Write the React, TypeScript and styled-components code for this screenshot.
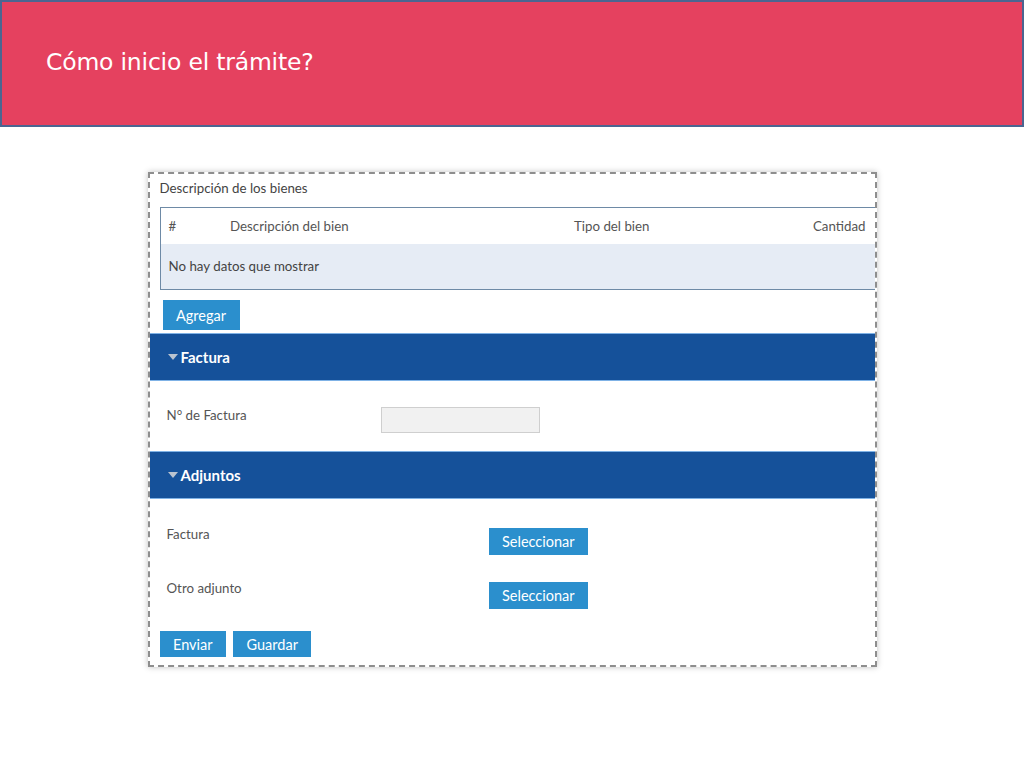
import styled, { createGlobalStyle } from 'styled-components';

const GlobalStyle = createGlobalStyle`
  html, body {
    margin: 0;
    padding: 0;
    background: #ffffff;
  }
  * {
    box-sizing: border-box;
  }
`;

const attachments = ['Factura', 'Otro adjunto'];

export default function App() {
  return (
    <Page>
      <GlobalStyle />
      <Banner>
        <BannerTitle>Cómo inicio el trámite?</BannerTitle>
      </Banner>
      <Stage>
        <Shot>
          <Caption>Descripción de los bienes</Caption>
          <Table>
            <thead>
              <tr>
                <Th style={{ width: 62 }}>#</Th>
                <Th style={{ width: 344 }}>Descripción del bien</Th>
                <Th>Tipo del bien</Th>
                <Th $right>Cantidad</Th>
              </tr>
            </thead>
            <tbody>
              <tr>
                <EmptyCell colSpan={4}>No hay datos que mostrar</EmptyCell>
              </tr>
            </tbody>
          </Table>
          <AddRow>
            <Button $h={30}>Agregar</Button>
          </AddRow>

          <SectionBar>
            <Caret />
            Factura
          </SectionBar>
          <FieldRow>
            <FieldLabel>N° de Factura</FieldLabel>
            <TextInput />
          </FieldRow>

          <SectionBar>
            <Caret />
            Adjuntos
          </SectionBar>
          <AttachList>
            {attachments.map(name => (
              <AttachRow key={name}>
                <FieldLabel>{name}</FieldLabel>
                <ButtonCell>
                  <Button $h={27}>Seleccionar</Button>
                </ButtonCell>
              </AttachRow>
            ))}
          </AttachList>

          <Footer>
            <Button $h={26}>Enviar</Button>
            <Button $h={26}>Guardar</Button>
          </Footer>
        </Shot>
      </Stage>
    </Page>
  );
}

const Page = styled.div`
  width: 1024px;
  height: 768px;
  background: #ffffff;
  font-family: Lato, 'Open Sans', sans-serif;
`;

const Banner = styled.header`
  height: 127px;
  background: #e5415f;
  border: 2px solid #4b6591;
  display: flex;
  align-items: center;
  padding: 0 0 4px 44px;
`;

const BannerTitle = styled.h1`
  margin: 0;
  font-family: 'DejaVu Sans', sans-serif;
  font-weight: 400;
  font-size: 23.5px;
  color: #ffffff;
  letter-spacing: -0.2px;
`;

const Stage = styled.main`
  display: flex;
  justify-content: center;
  padding-top: 45px;
`;

const Shot = styled.section`
  width: 729px;
  border: 2px dashed #8e8e8e;
  background: #ffffff;
  box-shadow: 0 0 6px rgba(0, 0, 0, 0.25);
  padding-bottom: 8px;
`;

const Caption = styled.div`
  padding: 6px 0 0 10px;
  height: 33px;
  font-size: 13.3px;
  color: #444;
`;

const Table = styled.table`
  margin-left: 10px;
  width: calc(100% - 10px);
  border-collapse: collapse;
  border: 1px solid #6e8aa6;
  border-right: none;
  font-size: 13.3px;
  color: #555;
`;

const Th = styled.th<{ $right?: boolean }>`
  height: 36px;
  padding: 0 ${p => (p.$right ? '9px' : '0')} 0 8px;
  text-align: ${p => (p.$right ? 'right' : 'left')};
  font-weight: 400;
  background: #ffffff;
`;

const EmptyCell = styled.td`
  height: 46px;
  padding: 0 8px;
  background: #e6ecf5;
  color: #444;
`;

const AddRow = styled.div`
  padding: 10px 0 3px 13px;
  display: flex;
`;

const Button = styled.button<{ $h: number }>`
  height: ${p => p.$h}px;
  padding: 0 13.5px;
  border: none;
  background: #2b8fcd;
  color: #ffffff;
  font-family: Lato, 'Open Sans', sans-serif;
  font-size: 14.5px;
  cursor: pointer;
`;

const SectionBar = styled.div`
  height: 48px;
  background: #15519a;
  border-top: 1px solid #7fb2e6;
  border-bottom: 1px solid #7fb2e6;
  display: flex;
  align-items: center;
  padding-left: 18px;
  color: #ffffff;
  font-size: 15px;
  font-weight: 700;
`;

const Caret = styled.span`
  width: 0;
  height: 0;
  border-left: 5px solid transparent;
  border-right: 5px solid transparent;
  border-top: 6px solid #b9c3d0;
  margin-right: 3px;
`;

const FieldRow = styled.div`
  height: 70px;
  display: grid;
  grid-template-columns: 214px 159px;
  align-items: start;
  padding: 26px 0 0 17px;
`;

const FieldLabel = styled.div`
  font-size: 13.3px;
  line-height: 16px;
  color: #555;
`;

const TextInput = styled.div`
  height: 26px;
  background: #f1f1f1;
  border: 1px solid #cfcfcf;
`;

const AttachList = styled.div`
  padding: 27px 0 0 17px;
  display: flex;
  flex-direction: column;
  gap: 25px;
`;

const AttachRow = styled.div`
  display: grid;
  grid-template-columns: 322px auto;
  align-items: start;
`;

const ButtonCell = styled.div`
  padding-top: 2px;
`;

const Footer = styled.div`
  display: flex;
  gap: 7px;
  padding: 22px 0 0 10px;
`;
